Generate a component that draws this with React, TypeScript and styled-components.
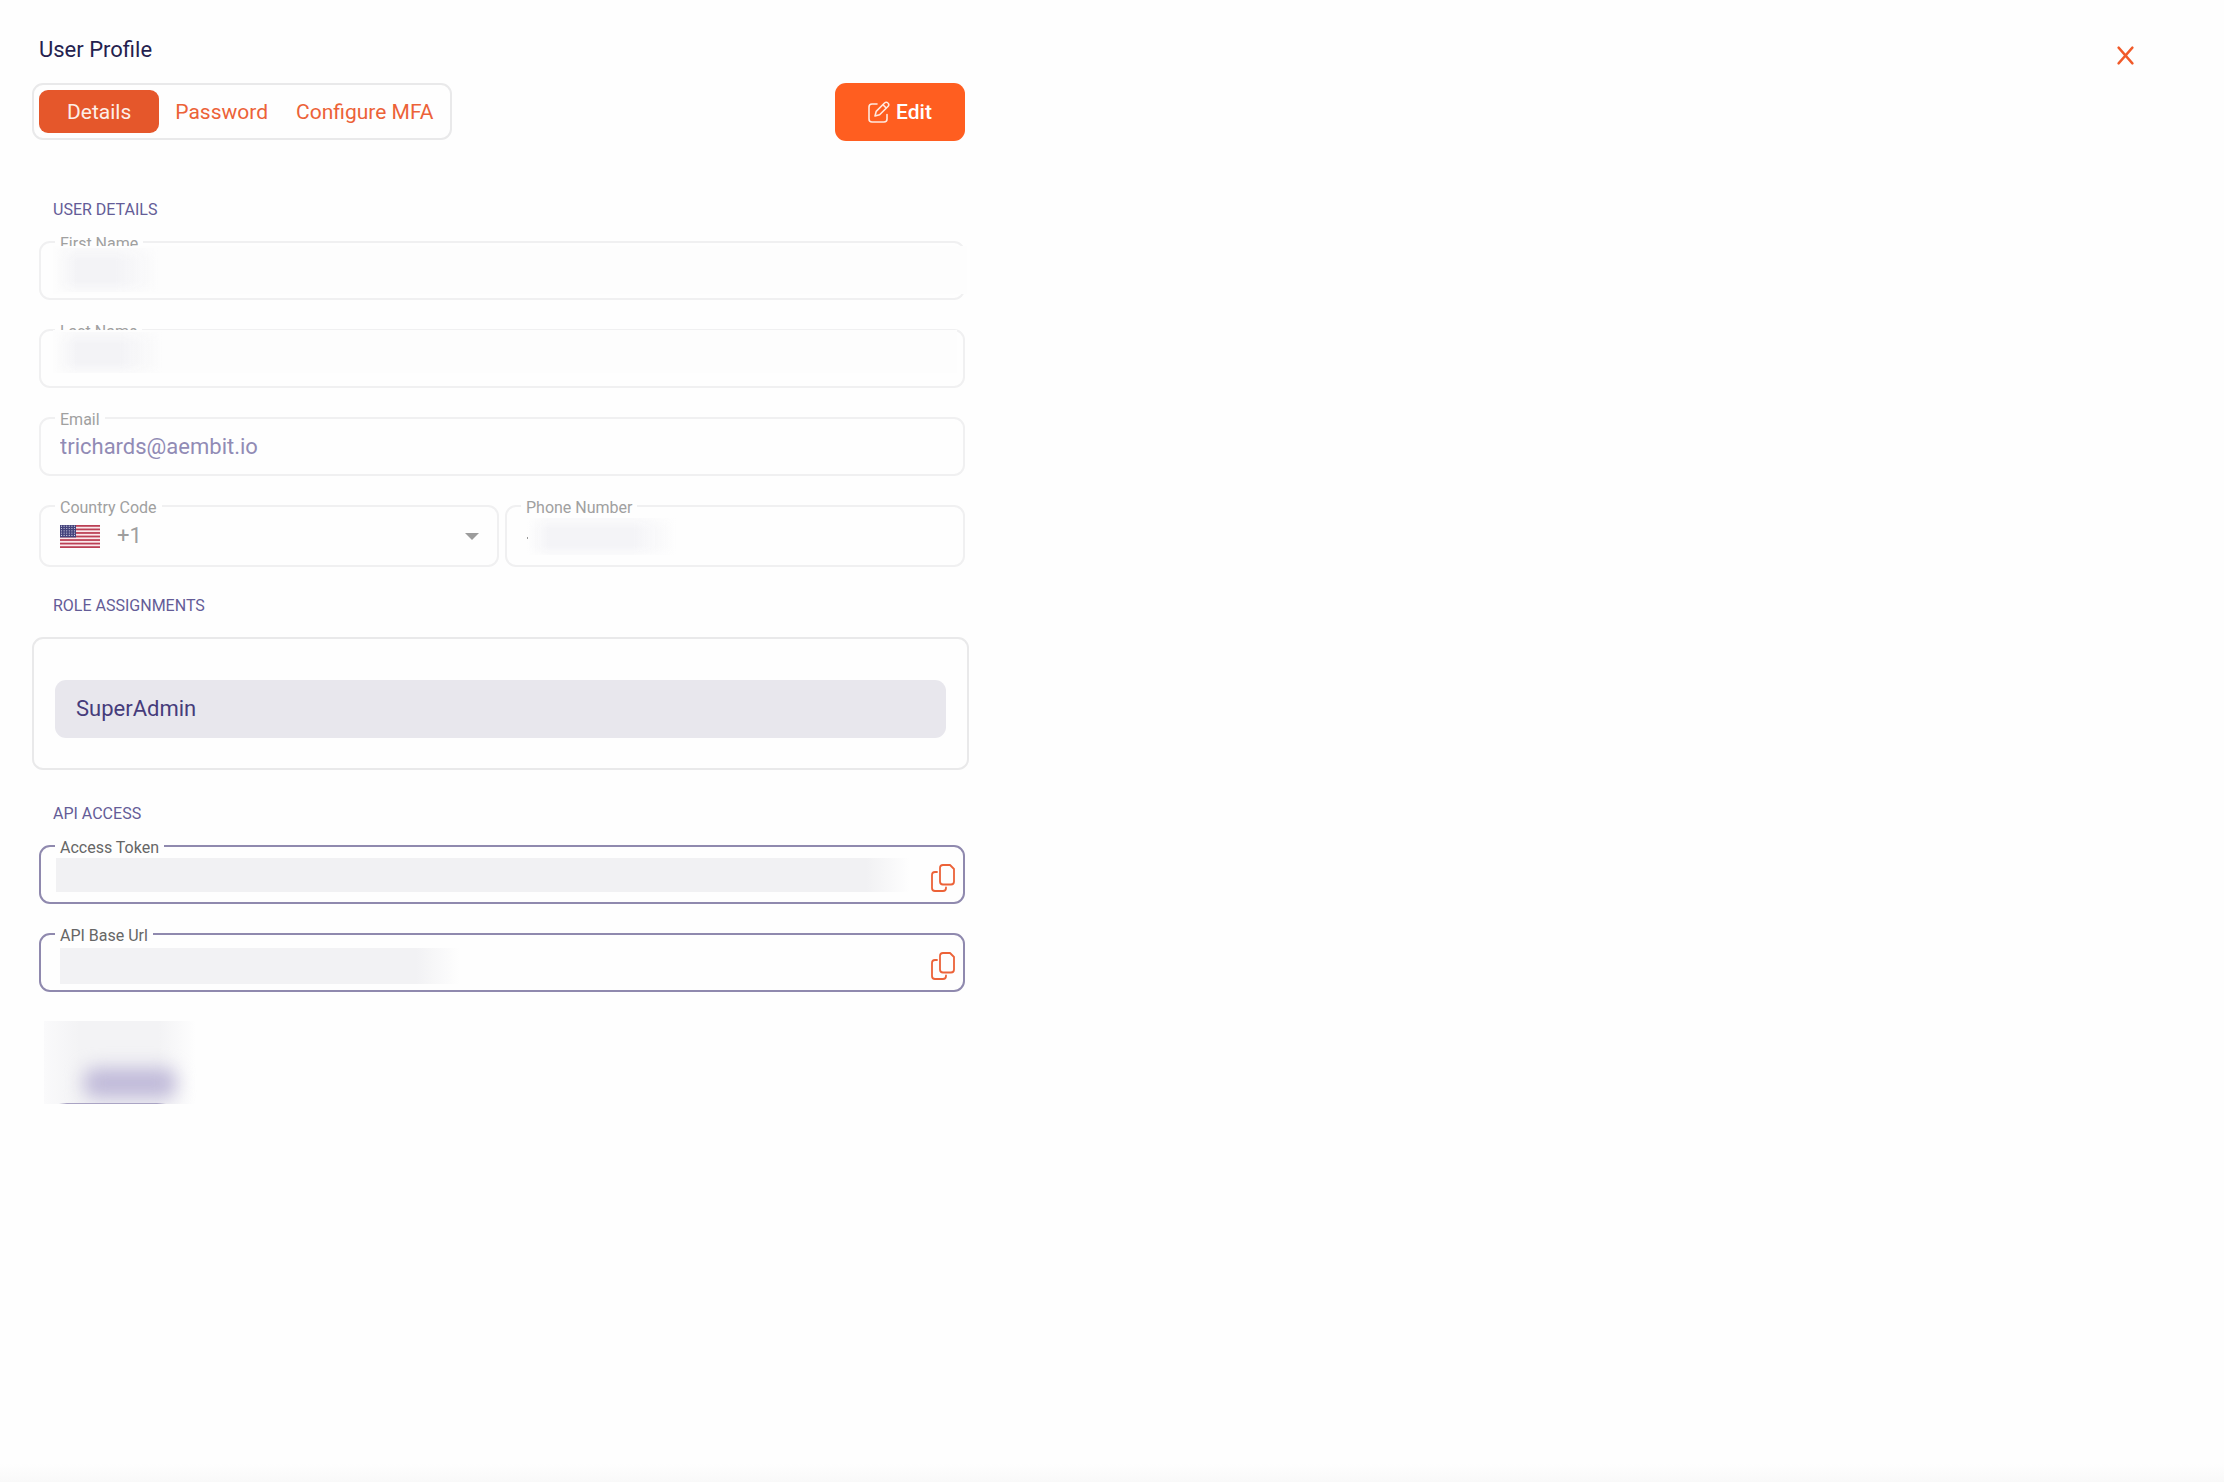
import React from "react";
import styled, { createGlobalStyle } from "styled-components";

const color = {
  page: "#fefefe",
  orange: "#ff5e20",
  tab: "#e5572b",
  link: "#ec6238",
  line: "#e9e9ea",
  faint: "#f0f0f1",
  violet: "#8f89ae",
  heading: "#645c97",
  ink: "#251f4f",
};

const GlobalStyle = createGlobalStyle`
  *, *::before, *::after { box-sizing: border-box; }
  body {
    margin: 0;
    background: ${color.page};
    font-family: Roboto, "Liberation Sans", sans-serif;
    font-size: 22px;
    line-height: 28px;
  }
  button, input, select { font: inherit; }
`;

const Page = styled.div`
  display: flex;
  flex-direction: column;
  min-height: 100vh;
`;

const Header = styled.header`
  display: flex;
  justify-content: space-between;
  align-items: flex-start;
  padding: 36px 86px 0 39px;
`;

const Title = styled.h1`
  margin: 0;
  font-size: 22px;
  line-height: 28px;
  font-weight: 400;
  color: ${color.ink};
`;

const CloseButton = styled.button`
  display: flex;
  padding: 10px 4px 0;
  border: 0;
  background: none;
  cursor: pointer;
`;

const Main = styled.main`
  width: 100%;
  max-width: 1001px;
  padding: 18px 32px 0;
`;

const Toolbar = styled.div`
  display: flex;
  justify-content: space-between;
  align-items: flex-start;
  margin-bottom: 59px;
  padding-right: 4px;
`;

const Tabs = styled.nav`
  display: flex;
  gap: 4px;
  padding: 5px;
  border: 2px solid ${color.line};
  border-radius: 11px;
`;

const Tab = styled.button<{ $active?: boolean }>`
  height: 43px;
  padding: 0 ${(p) => (p.$active ? 28 : 12)}px;
  border: 0;
  border-radius: 9px;
  background: ${(p) => (p.$active ? color.tab : "none")};
  color: ${(p) => (p.$active ? "#fdeee8" : color.link)};
  font-size: 21px;
  cursor: pointer;
`;

const EditButton = styled.button`
  display: flex;
  align-items: center;
  justify-content: center;
  gap: 6px;
  width: 130px;
  height: 58px;
  border: 0;
  border-radius: 11px;
  background: ${color.orange};
  color: #fff;
  font-size: 21px;
  font-weight: 500;
  cursor: pointer;
`;

const Section = styled.section`
  padding-bottom: 29px;
`;

const SectionTitle = styled.h2`
  margin: 0 0 21px;
  padding-left: 21px;
  font-size: 16px;
  line-height: 20px;
  font-weight: 400;
  text-transform: uppercase;
  color: ${color.heading};
`;

const Fields = styled.div`
  display: grid;
  gap: 29px;
  padding: 0 4px 0 7px;
`;

const Pair = styled.div`
  display: grid;
  grid-template-columns: 1fr 1fr;
  gap: 6px;
`;

const FieldBox = styled.div<{ $tone: "faint" | "violet"; $tall?: boolean }>`
  position: relative;
  display: flex;
  align-items: center;
  height: ${(p) => (p.$tall ? 62 : 59)}px;
  padding: 0 8px 0 19px;
  border: 2px solid ${(p) => color[p.$tone]};
  border-radius: 11px;
`;

const FieldLabel = styled.label<{ $muted: boolean }>`
  position: absolute;
  top: -9px;
  left: 14px;
  padding: 0 5px;
  background: ${color.page};
  font-size: 16px;
  line-height: 20px;
  color: ${(p) => (p.$muted ? "#a0a0a0" : "#666")};
`;

const TextInput = styled.input`
  flex: 1;
  min-width: 0;
  padding: 0;
  border: 0;
  outline: 0;
  background: none;
  color: #918bb5;
`;

const CodeSelect = styled.select`
  flex: 1;
  min-width: 0;
  padding: 0 0 0 17px;
  border: 0;
  appearance: none;
  background: none;
  color: #9e9e9e;
  opacity: 1;
`;

const CopyButton = styled.button`
  display: flex;
  padding: 6px 0 0;
  border: 0;
  background: none;
  cursor: pointer;
`;

const Arrow = styled.svg`
  margin-right: 10px;
`;

type Box = { $x: number; $y: number; $w: string; $h: number };

const Redaction = styled.span<Box & { $shade: string; $solid?: boolean }>`
  position: absolute;
  left: ${(p) => p.$x}px;
  top: ${(p) => p.$y}px;
  width: ${(p) => p.$w};
  height: ${(p) => p.$h}px;
  pointer-events: none;
  background: ${(p) =>
    `linear-gradient(90deg, transparent, ${p.$shade} ${p.$solid ? 0 : 22}px, ${p.$shade} calc(100% - 44px), transparent)`};
  mask-image: ${(p) =>
    p.$solid ? "none" : "linear-gradient(rgba(0, 0, 0, 0.4), #000 30%, #000 75%, rgba(0, 0, 0, 0.3))"};
`;

const Veil = styled.span<Box>`
  position: absolute;
  left: ${(p) => p.$x}px;
  top: ${(p) => p.$y}px;
  width: ${(p) => p.$w};
  height: ${(p) => p.$h}px;
  pointer-events: none;
  background: #fdfdfd;
`;

const Speck = styled.span`
  position: absolute;
  left: 20px;
  top: 30px;
  width: 1px;
  height: 2px;
  background: #999;
`;

const Card = styled.div`
  margin-bottom: 5px;
  padding: 41px 21px 30px;
  border: 2px solid ${color.line};
  border-radius: 11px;
`;

const Role = styled.div`
  padding: 15px 21px;
  border-radius: 11px;
  background: #e8e7ed;
  color: #463c7b;
`;

const HiddenLink = styled.div`
  position: relative;
  overflow: hidden;
  width: 164px;
  height: 83px;
  margin-left: 12px;
  background: linear-gradient(90deg, #fafafb, #f3f3f5 35px, #f3f3f5 115px, #fefefe 152px);

  &::before {
    content: "";
    position: absolute;
    left: 40px;
    top: 47px;
    width: 92px;
    height: 30px;
    border-radius: 11px;
    background: #c0bad9;
    filter: blur(9px);
  }

  &::after {
    content: "";
    position: absolute;
    left: 15px;
    bottom: 0;
    width: 107px;
    height: 1px;
    background: linear-gradient(90deg, transparent, #aaa4c4 8px, #aaa4c4 98px, transparent);
  }
`;

const Footer = styled.footer`
  height: 18px;
  margin-top: auto;
  background: linear-gradient(#fefefe, #f9f9f9);
`;

const CloseIcon = () => (
  <svg width="17" height="19" viewBox="0 0 17 19" fill="none" stroke="#f15a29" strokeWidth="2.4" strokeLinecap="round">
    <path d="M1.6 1.6 15.4 17.4M15.4 1.6 1.6 17.4" />
  </svg>
);

const EditIcon = () => (
  <svg width="22" height="22" viewBox="0 0 22 22" fill="none" stroke="#ffe9df" strokeWidth="1.6" strokeLinecap="round" strokeLinejoin="round">
    <path d="M9 3H4a3 3 0 0 0-3 3v12a3 3 0 0 0 3 3h12a3 3 0 0 0 3-3v-4.500" />
    <path d="m7 15 1.200-4.600 8.600-8.600a2 2 0 0 1 2.900 0l.5.5a2 2 0 0 1 0 2.900l-8.600 8.600zM15 3.800l3.300 3.300" />
  </svg>
);

const CopyIcon = () => (
  <svg width="24" height="28" viewBox="0 0 24 28" fill="none" stroke="#ec6238" strokeWidth="1.8" strokeLinecap="round" strokeLinejoin="round">
    <path d="M12 1h7l4 4v12.500a3 3 0 0 1-3 3h-8a3 3 0 0 1-3-3V4a3 3 0 0 1 3-3z" />
    <path d="M6 8H4a3 3 0 0 0-3 3v13a3 3 0 0 0 3 3h8a3 3 0 0 0 3-3v-.5" />
  </svg>
);

const stars = Array.from({ length: 5 }, (_, r) => Array.from({ length: 6 }, (_, c) => [1.5 + c * 2.6, 1.2 + r * 2.3])).flat();

const Flag = () => (
  <svg width="40" height="23" viewBox="0 0 40 23" role="img" aria-label="United States">
    <rect width="40" height="23" fill="#fbe9ec" />
    {[0, 2, 4, 6, 8, 10, 12].map((i) => (
      <rect key={i} y={(i * 23) / 13} width="40" height={23 / 13} fill="#bb4055" />
    ))}
    <rect width="16" height="12.400" fill="#44437c" />
    {stars.map(([x, y], i) => (
      <circle key={i} cx={x} cy={y} r="0.6" fill="#d5d4e6" />
    ))}
  </svg>
);

type FieldProps = {
  id: string;
  label: string;
  value?: string;
  copy?: boolean;
  tall?: boolean;
  children?: React.ReactNode;
};

const Field = ({ id, label, value = "", copy, tall, children }: FieldProps) => (
  <FieldBox $tone={copy ? "violet" : "faint"} $tall={tall}>
    <FieldLabel htmlFor={id} $muted={!copy}>{label}</FieldLabel>
    <TextInput id={id} type="text" defaultValue={value} readOnly />
    {copy && (
      <CopyButton type="button" aria-label={`Copy ${label}`}>
        <CopyIcon />
      </CopyButton>
    )}
    {children}
  </FieldBox>
);

export default function App() {
  return (
    <Page>
      <GlobalStyle />
      <Header>
        <Title>User Profile</Title>
        <CloseButton type="button" aria-label="Close">
          <CloseIcon />
        </CloseButton>
      </Header>
      <Main>
        <Toolbar>
          <Tabs>
            <Tab type="button" $active>Details</Tab>
            <Tab type="button">Password</Tab>
            <Tab type="button">Configure MFA</Tab>
          </Tabs>
          <EditButton type="button">
            <EditIcon />
            Edit
          </EditButton>
        </Toolbar>

        <Section>
          <SectionTitle>User Details</SectionTitle>
          <Fields>
            <Field id="first" label="First Name">
              <Veil $x={12} $y={3} $w="calc(100% - 8px)" $h={48} />
              <Redaction $x={14} $y={5} $w="104px" $h={44} $shade="#f3f3f6" />
            </Field>
            <Field id="last" label="Last Name">
              <Veil $x={12} $y={-1} $w="calc(100% - 18px)" $h={43} />
              <Redaction $x={14} $y={1} $w="108px" $h={41} $shade="#f3f3f6" />
            </Field>
            <Field id="email" label="Email" value="trichards@aembit.io" />
            <Pair>
              <FieldBox $tone="faint" $tall>
                <FieldLabel htmlFor="code" $muted>Country Code</FieldLabel>
                <Flag />
                <CodeSelect id="code" disabled>
                  <option>+1</option>
                </CodeSelect>
                <Arrow width="14" height="7" viewBox="0 0 14 7" aria-hidden="true">
                  <path d="M0 0h14L7 7z" fill="#9c9c9c" />
                </Arrow>
              </FieldBox>
              <Field id="phone" label="Phone Number" tall>
                <Redaction $x={20} $y={11} $w="150px" $h={37} $shade="#f4f4f7" />
                <Speck />
              </Field>
            </Pair>
          </Fields>
        </Section>

        <Section>
          <SectionTitle>Role Assignments</SectionTitle>
          <Card>
            <Role>SuperAdmin</Role>
          </Card>
        </Section>

        <Section>
          <SectionTitle>API Access</SectionTitle>
          <Fields>
            <Field id="token" label="Access Token" copy>
              <Redaction $x={15} $y={11} $w="calc(100% - 68px)" $h={34} $shade="#f1f1f3" $solid />
            </Field>
            <Field id="url" label="API Base Url" copy>
              <Redaction $x={19} $y={13} $w="400px" $h={36} $shade="#f2f2f4" $solid />
            </Field>
          </Fields>
        </Section>
        <HiddenLink />
      </Main>
      <Footer />
    </Page>
  );
}
